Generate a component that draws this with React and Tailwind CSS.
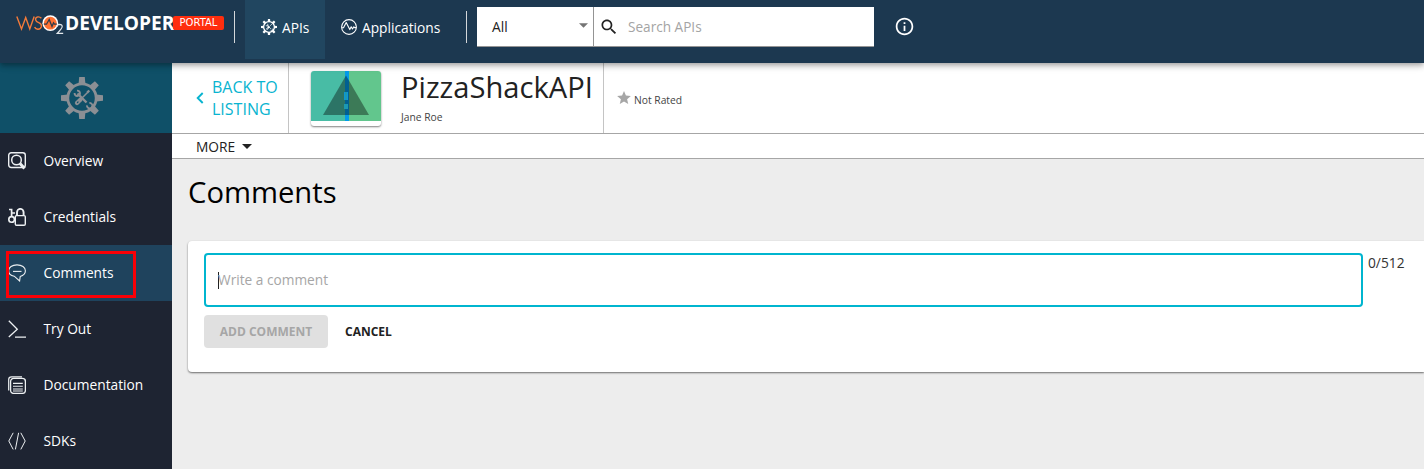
import React from 'react';

const TEETH = [0, 45, 90, 135, 180, 225, 270, 315];

function Gear({ className, ring = 2.8 }) {
  return (
    <svg viewBox="0 0 42 42" className={className} fill="none" stroke="currentColor">
      <circle cx="21" cy="21" r="14.2" strokeWidth={ring} />
      {TEETH.map((a) => (
        <path key={a} d="M17.6 7 L18.2 0 H23.8 L24.4 7 Z" fill="currentColor" stroke="none" transform={`rotate(${a} 21 21)`} />
      ))}
      <path d="M16.5 16.5 L25.5 25.5" strokeWidth="2.4" />
      <path d="M26.8 15.2 L20 22" strokeWidth="1.5" />
      <path d="M19.6 22.4 L16 26" strokeWidth="4.2" strokeLinecap="round" />
      <path d="M17 25 L16.4 25.6" stroke="#0f5068" strokeWidth="1.2" strokeLinecap="round" />
      <path d="M16 13.6 A2.7 2.7 0 1 1 13.6 16 M28.4 26 A2.7 2.7 0 1 1 26 28.4" strokeWidth="1.9" />
      <path d="M26.2 15.6 L28.3 13.5" strokeWidth="2.2" />
    </svg>
  );
}

function AppsIcon() {
  return (
    <svg viewBox="0 0 16 16" className="h-4 w-4" fill="none" stroke="currentColor" strokeWidth="1.1">
      <circle cx="8" cy="8" r="7.4" />
      <path d="M.8 8.8 L2.5 8.8 L5.2 3.6 L8.8 10.6 L10.2 7.7 L11.5 10 L12.8 7.8 L13.6 8.6 H15.2" strokeLinejoin="round" />
    </svg>
  );
}

const icons = {
  overview: (
    <>
      <rect x=".7" y=".7" width="16.6" height="14.8" rx="2.5" strokeWidth="1.4" />
      <circle cx="8.5" cy="8" r="4.8" strokeWidth="1.5" />
      <path d="M12 11.5 L16.5 16.5" strokeWidth="3" />
    </>
  ),
  credentials: (
    <>
      <circle cx="3.6" cy="11.4" r="2.8" strokeWidth="1.6" />
      <path d="M3.6 8.6 V.7 M3.6 1.5 H1 M3.6 5 H7" strokeWidth="1.7" />
      <rect x="7.3" y="7.6" width="10" height="9.6" rx="1.2" strokeWidth="1.4" />
      <path d="M9 7.3 V4.2 a3.3 3.3 0 0 1 6.6 0 V7.3" strokeWidth="1.9" />
    </>
  ),
  comments: (
    <>
      <path d="M6.2 12.2 C2.5 11.5 .6 9.5 .6 6.8 C.6 3.3 4.2 .9 9 .9 C13.8 .9 17.4 3.3 17.4 6.8 C17.4 9.8 15.4 11.5 12.2 12.6 L11.6 17 L6.2 12.2 Z" strokeWidth="1.1" />
      <path d="M5 7.4 H13.5" strokeWidth="1.1" />
    </>
  ),
  tryout: <path d="M.8 .7 L9.3 9.2 L.8 17 M7 17.2 H18" strokeWidth="1.3" />,
  docs: (
    <>
      <path d="M.7 14.5 V3.5 Q.7 .8 3.5 .8 H14" strokeWidth="1.2" />
      <rect x="2.6" y="2.4" width="14.8" height="15" rx="3" strokeWidth="1.3" />
      <path d="M5 7.4 H14.8 M5 10.3 H14.8 M5 13 H14.8 M5 15 H14.8" strokeWidth="1.1" />
    </>
  ),
  sdks: <path d="M5.2 .8 L.8 9 L5.2 17.4 M12.8 .8 L17.2 9 L12.8 17.4 M10.6 .8 L7.4 17.4" strokeWidth="1" />,
};

const items = [
  ['overview', 'Overview'],
  ['credentials', 'Credentials'],
  ['comments', 'Comments'],
  ['tryout', 'Try Out'],
  ['docs', 'Documentation'],
  ['sdks', 'SDKs'],
];

function Logo() {
  return (
    <div className="ml-4 mt-[13px] flex h-[22px] w-[208px] items-start whitespace-nowrap">
      <svg viewBox="0 0 49 22" className="h-[22px] w-[49px] shrink-0" fill="none">
        <path d="M.8 3.5 L5.5 16 L9.7 4.5 L13.8 16 L18.2 3.5 M25.4 5.2 Q23.8 3.6 21.8 3.9 Q19.2 4.4 19.6 6.8 Q20 8.6 22.7 9.6 Q25.8 10.8 25.4 13.4 Q24.8 16.3 21.8 16.2 Q19.6 16 18.6 14.2" stroke="#f47b3a" strokeWidth="1.4" />
        <circle cx="34.3" cy="10.2" r="7.9" fill="#fff" />
        <circle cx="34.3" cy="10.2" r="6.4" fill="#ff7233" />
        <path d="M27.8 11.2 H30.5 L33.2 6.5 L36 13.5 L37.5 9.9 L38.5 11.2 H40.8" stroke="#333b49" strokeWidth="1.3" />
        <path d="M41 13.7 Q41.2 11.3 43.6 11.3 Q46.3 11.4 46.2 13.7 Q46 15.3 41.2 20.4 H47.2" stroke="#e4e9ed" strokeWidth="1.2" />
      </svg>
      <span className="w-[108px] text-[19.15px] leading-5 font-bold">DEVELOPER</span>
      <span className="mt-[3px] h-[14px] w-[51px] rounded-[2px] bg-[#ff2e0e] text-center font-['DejaVu_Sans',sans-serif] text-[10px] leading-[14px]">
        PORTAL
      </span>
    </div>
  );
}

function Header() {
  return (
    <header className="relative z-10 flex h-[63px] shrink-0 items-start bg-[#1c3850] text-white shadow-[0_2px_4px_-1px_rgba(0,0,0,0.2),0_4px_5px_rgba(0,0,0,0.14),0_1px_10px_rgba(0,0,0,0.12)]">
      <Logo />
      <div className="mt-[11px] ml-[10px] h-8 w-px bg-[#d4d7da]" />
      <div className="ml-[10px] flex h-[59px] w-20 items-center bg-[#214660] pl-4">
        <Gear className="mb-[5px] h-4 w-4" ring={3.5} />
        <span className="mb-[3px] ml-[5px] text-[13.75px]">APIs</span>
      </div>
      <div className="flex h-[59px] w-[141px] items-center pl-4">
        <span className="mb-[5px]"><AppsIcon /></span>
        <span className="mb-[3px] ml-[5px] text-[13.75px]">Applications</span>
      </div>
      <div className="mt-[11px] h-8 w-px bg-[#d4d7da]" />
      <div className="mt-[7px] ml-[10px] flex h-10 w-[397px] border-b border-[#949494] bg-white text-[13.75px] text-[#222]">
        <div className="flex w-[117px] items-center justify-between border-r border-[#949494] pr-[5px] pl-[15px]">
          <span className="mt-[2px]">All</span>
          <svg viewBox="0 0 10 5" className="mb-[3px] h-[5px] w-[9px]"><path d="M0 0H10L5 5Z" fill="#757575" /></svg>
        </div>
        <svg viewBox="0 0 24 24" className="mt-[10px] ml-[5px] h-5 w-5" fill="#222">
          <path d="M15.5 14h-.79l-.28-.27C15.41 12.59 16 11.11 16 9.5 16 5.91 13.09 3 9.5 3S3 5.91 3 9.5 5.91 16 9.5 16c1.61 0 3.09-.59 4.23-1.57l.27.28v.79l5 4.99L20.49 19l-4.99-5zm-6 0C7.01 14 5 11.99 5 9.5S7.01 5 9.5 5 14 7.01 14 9.5 11.99 14 9.5 14z" />
        </svg>
        <span className="mt-[10px] ml-[9px] text-[13.6px] text-[#a4a4a4]">Search APIs</span>
      </div>
      <svg viewBox="0 0 24 24" className="mt-[16px] ml-5 h-[21px] w-[21px]" fill="#fff">
        <path d="M11 7h2v2h-2zm0 4h2v6h-2zm1-9C6.48 2 2 6.48 2 12s4.48 10 10 10 10-4.48 10-10S17.52 2 12 2zm0 18c-4.41 0-8-3.59-8-8s3.59-8 8-8 8 3.59 8 8-3.59 8-8 8z" />
      </svg>
    </header>
  );
}

function Sidebar() {
  return (
    <nav className="w-[172px] shrink-0 bg-[#1e2432] text-white">
      <div className="flex h-[70px] items-center justify-center bg-[#0f5068] pr-2 text-[#8b8f94]">
        <Gear className="h-[42px] w-[42px]" />
      </div>
      {items.map(([key, label]) => (
        <div key={key} className={`relative flex h-14 items-center pl-2 ${key === 'comments' ? 'bg-[#1f435d]' : ''}`}>
          <svg viewBox="0 0 18 18" className="h-[18px] w-[18px]" fill="none" stroke="#edf0f2">{icons[key]}</svg>
          <span className="ml-[17.5px] text-[13.75px]">{label}</span>
          {key === 'comments' && <div className="absolute top-[6px] left-[6px] h-[47px] w-[130px] border-3 border-[#fb0007]" />}
        </div>
      ))}
    </nav>
  );
}

function ApiBar() {
  return (
    <>
      <div className="flex h-[71px] border-b border-[#a6a6a6] bg-white">
        <div className="flex w-[117px] items-center border-r border-[#c4c4c4] pl-6 text-[#08b4d0]">
          <svg viewBox="0 0 8 12" className="h-3 w-2" fill="none" stroke="currentColor" strokeWidth="1.9"><path d="M6.7 1L1.7 6L6.7 11" /></svg>
          <span className="ml-2 text-[16px] leading-[22px]">BACK TO<br />LISTING</span>
        </div>
        <div className="mt-2 ml-[22px] h-[55px] w-[70px] overflow-hidden rounded-[3px] bg-white shadow-[0_1px_2px_rgba(0,0,0,0.5)]">
          <svg viewBox="0 0 70 50" className="h-[50px] w-[70px]">
            <rect width="36" height="50" fill="#48bca5" />
            <rect x="36" width="34" height="50" fill="#62c68d" />
            <rect x="34" width="4" height="50" fill="#029bea" />
            <path d="M35 4.5L58 44H12Z" fill="#000" fillOpacity=".38" />
            <rect x="33" y="21" width="4" height="8" fill="#0a96d8" />
            <rect x="34" y="21" width="2" height="8" fill="#1c98b2" />
            <rect x="33" y="33" width="4" height="5" fill="#1c98b2" />
          </svg>
        </div>
        <div className="ml-5 w-[203px] border-r border-[#c4c4c4] text-[#222]">
          <div className="mt-1 text-[29.15px] leading-10">PizzaShackAPI</div>
          <div className="mt-[3px] text-[10.3px] leading-[14px] text-[#444]">Jane Roe</div>
        </div>
        <div className="ml-[13px] flex h-[70px] items-center text-[#444]">
          <svg viewBox="2 2 20 19" className="mb-[2px] h-[13px] w-[14px]" fill="#a6a6a6"><path d="M12 17.27L18.18 21l-1.64-7.03L22 9.24l-7.19-.61L12 2 9.19 8.63 2 9.24l5.46 4.73L5.82 21z" /></svg>
          <span className="mt-[6px] ml-[3px] text-[10.3px]">Not Rated</span>
        </div>
      </div>
      <div className="flex h-[25px] items-center border-b border-[#a6a6a6] bg-white pl-6 text-[13.75px] text-[#222]">
        <span className="mt-[2px]">MORE</span>
        <svg viewBox="0 0 10 5" className="ml-[7px] h-[5px] w-[10px]"><path d="M0 0H10L5 5Z" fill="#222" /></svg>
      </div>
    </>
  );
}

export default function App() {
  return (
    <div className="flex h-[469px] w-[1424px] flex-col overflow-hidden bg-[#ededed] font-['Open_Sans','Noto_Sans',sans-serif]">
      <Header />
      <div className="flex min-h-0 flex-1">
        <Sidebar />
        <main className="min-w-0 flex-1">
          <ApiBar />
          <h1 className="mt-[13px] ml-4 text-[29.2px] leading-10 text-black">Comments</h1>
          <section className="mt-[29px] ml-4 flex h-[131px] rounded-l-[4px] bg-white pt-3 pl-4 shadow-[0_1px_2px_rgba(0,0,0,0.55)]">
            <div className="w-[1159px]">
              <div className="flex h-[54px] items-center rounded-[4px] border-2 border-[#00b5cf] pl-3 text-[13.7px] text-[#a6a6a6]">
                <span className="h-[17px] w-px bg-[#222]" />
                <span className="-ml-px">Write a comment</span>
              </div>
              <div className="mt-2 flex text-[12px] font-bold">
                <button className="h-[33px] w-[124px] rounded-[4px] bg-[#e0e0e0] pt-px text-[#a6a6a6]">ADD COMMENT</button>
                <button className="ml-[17px] pt-px text-[#222]">CANCEL</button>
              </div>
            </div>
            <span className="ml-[5px] text-[13.75px] text-[#333]">0/512</span>
          </section>
        </main>
      </div>
    </div>
  );
}
